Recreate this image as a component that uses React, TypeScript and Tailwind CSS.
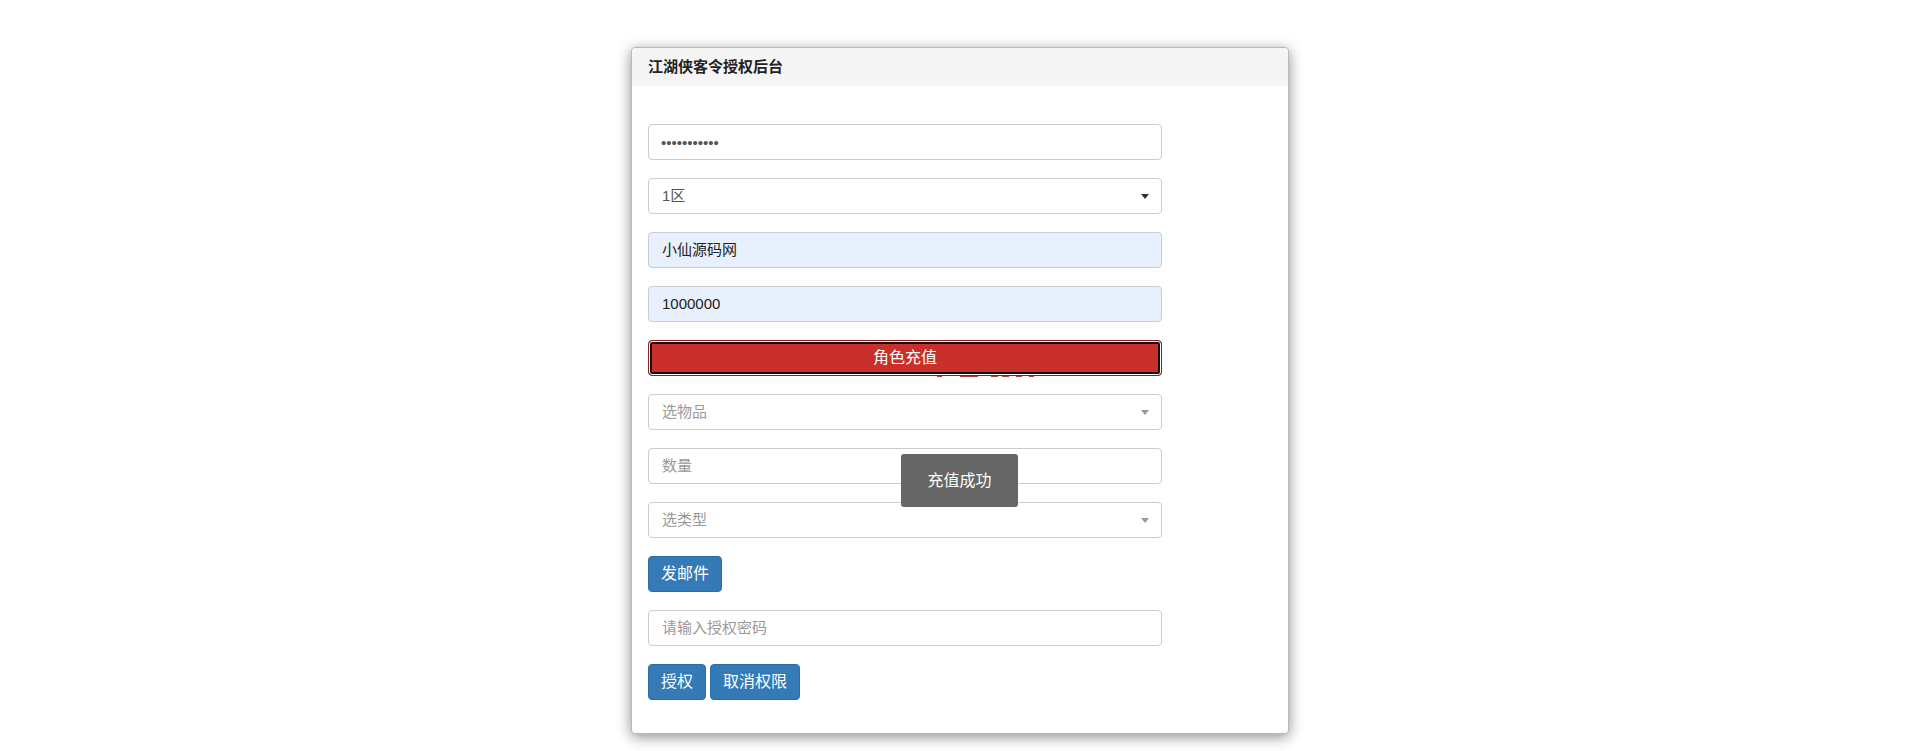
import { ReactNode } from "react";

const font = "font-['Liberation_Sans','Noto_Sans_CJK_SC',sans-serif]";

const Caret = ({ muted }: { muted?: boolean }) => (
  <span
    className={`ml-auto h-0 w-0 border-x-[4px] border-t-[5px] border-x-transparent ${
      muted ? "border-t-[#999]" : "border-t-[#333]"
    }`}
  />
);

interface FieldProps {
  text: string;
  placeholder?: boolean;
  filled?: boolean;
  caret?: "dark" | "muted";
}
const Field = ({ text, placeholder, filled, caret }: FieldProps) => {
  return (
    <div
      className={`flex h-[36px] w-[514px] items-center rounded-[4px] border border-[#ccc] px-3 text-[15px] ${
        filled ? "bg-[#e8f0fe] text-[#222]" : "bg-white text-[#555]"
      } ${placeholder ? "text-[#999]" : ""}`}
    >
      <span className="pl-[1px]">{text}</span>
      {caret && <Caret muted={caret === "muted"} />}
    </div>
  );
};

const BlueButton = ({ children }: { children: ReactNode }) => (
  <button className="h-[36px] rounded-[4px] border border-[#2e6da4] bg-[#337ab7] px-3 text-[16px] text-white">
    {children}
  </button>
);

// leftover marks under the red button
const marks = [
  "left-[289px] w-[5px]",
  "left-[312px] w-[18px]",
  "left-[343px] w-[7px]",
  "left-[354px] w-[7px]",
  "left-[368px] w-[6px]",
  "left-[381px] w-[5px]",
];

export default function App() {
  return (
    <div className={`min-h-[751px] bg-white ${font}`}>
      <div className="flex justify-center pl-[6px] pt-[47px]">
        <div className="relative w-[658px] rounded-[4px] border border-[#b9b9b9] bg-white shadow-[0_3px_14px_rgba(0,0,0,0.45)]">
          <div className="flex h-[38px] items-center rounded-t-[4px] bg-[#f5f5f5] px-4 text-[15px] font-bold text-[#222]">
            江湖侠客令授权后台
          </div>
          <div className="flex flex-col gap-[18px] px-4 pb-[33px] pt-[38px]">
            <input
              type="password"
              readOnly
              defaultValue="12345678901"
              className="h-[36px] w-[514px] rounded-[4px] border border-[#ccc] px-3 text-[15px] text-[#555] outline-none"
            />
            <Field text="1区" caret="dark" />
            <Field text="小仙源码网" filled />
            <Field text="1000000" filled />
            <div className="relative">
              <button className="h-[36px] w-[514px] rounded-[4px] border border-[#8f1d1a] bg-[#c9302c] text-[16px] text-white shadow-[inset_0_0_0_1px_#fff,inset_0_0_0_3px_#111]">
                角色充值
              </button>
              {marks.map((m) => (
                <span
                  key={m}
                  className={`absolute top-[36px] h-[1px] bg-[#b33a36] ${m}`}
                />
              ))}
            </div>
            <Field text="选物品" placeholder caret="muted" />
            <Field text="数量" placeholder />
            <Field text="选类型" placeholder caret="muted" />
            <div>
              <BlueButton>发邮件</BlueButton>
            </div>
            <Field text="请输入授权密码" placeholder />
            <div className="flex gap-[4px]">
              <BlueButton>授权</BlueButton>
              <BlueButton>取消权限</BlueButton>
            </div>
          </div>
          <div className="absolute left-[269px] top-[406px] flex h-[53px] w-[117px] items-center justify-center rounded-[3px] bg-[#666] text-[16px] text-white">
            充值成功
          </div>
        </div>
      </div>
    </div>
  );
}
